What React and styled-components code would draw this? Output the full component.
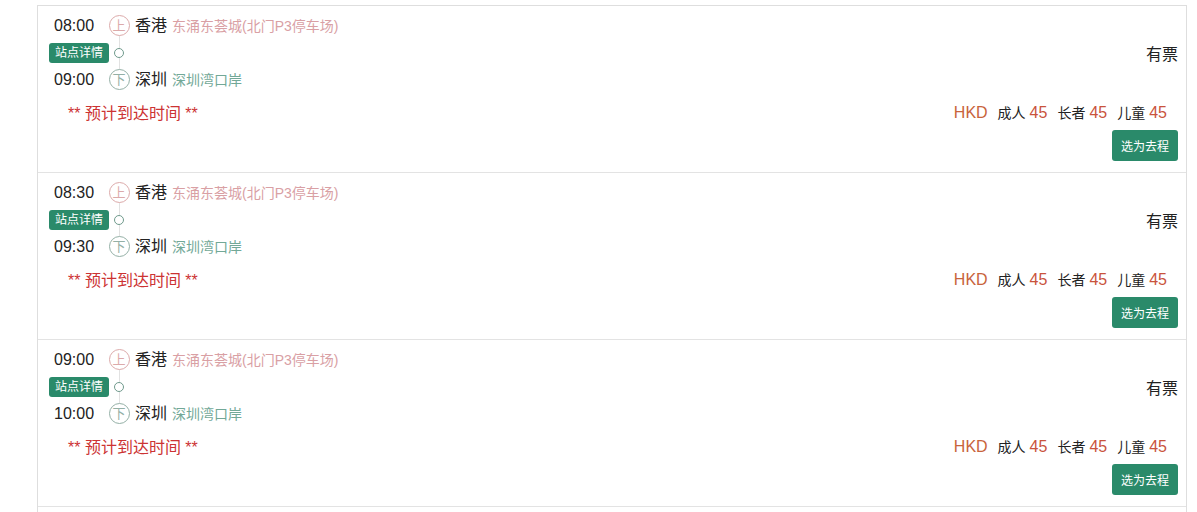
import React from "react";
import styled, { createGlobalStyle } from "styled-components";

const Global = createGlobalStyle`
  html, body { margin: 0; padding: 0; background: #fff; }
  body {
    font-family: "Liberation Sans", "Noto Sans CJK SC", sans-serif;
    color: #222;
  }
`;

const Page = styled.div`
  padding: 5px 10px 0 37px;
`;

const List = styled.div`
  border: 1px solid #dedede;
  border-bottom: none;
  padding-bottom: 12px;
`;

const Card = styled.div`
  display: flex;
  flex-direction: column;
  padding: 6px 8px 11px 11px;
  border-bottom: 1px solid #e3e3e3;
`;

const TopArea = styled.div`
  display: flex;
  justify-content: space-between;
  align-items: center;
`;

const RouteGrid = styled.div`
  display: grid;
  grid-template-columns: 60px 20px auto;
  grid-template-rows: repeat(3, 27px);
  align-items: center;
`;

const Time = styled.span`
  grid-column: 1;
  grid-row: ${(p) => p.$row};
  padding-left: 5px;
  font-size: 16px;
  line-height: 27px;
  color: #222;
`;

const Rail = styled.span`
  grid-column: 2;
  grid-row: 1 / 4;
  justify-self: center;
  align-self: stretch;
  width: 1px;
  margin: 13px 0;
  background: #e2e2e2;
`;

const StopMark = styled.span`
  grid-column: 2;
  grid-row: ${(p) => p.$row};
  justify-self: center;
  z-index: 1;
  box-sizing: border-box;
  width: 21px;
  height: 21px;
  border-radius: 50%;
  border: 1px solid ${(p) => p.$color};
  background: #fff;
  color: ${(p) => p.$color};
  font-size: 13px;
  line-height: 19px;
  text-align: center;
`;

const Dot = styled.span`
  grid-column: 2;
  grid-row: 2;
  justify-self: center;
  z-index: 1;
  box-sizing: border-box;
  width: 10px;
  height: 10px;
  border-radius: 50%;
  border: 1px solid #6f9a8c;
  background: #fff;
`;

const Badge = styled.span`
  grid-column: 1;
  grid-row: 2;
  justify-self: start;
  box-sizing: border-box;
  width: 60px;
  height: 20px;
  border-radius: 3px;
  background: #2a8a6a;
  color: #fff;
  font-size: 12px;
  line-height: 20px;
  text-align: center;
`;

const Stop = styled.span`
  grid-column: 3;
  grid-row: ${(p) => p.$row};
  padding-left: 6px;
  white-space: nowrap;
  line-height: 27px;
`;

const City = styled.span`
  font-size: 16px;
  color: #222;
`;

const Place = styled.span`
  margin-left: 5px;
  font-size: 14px;
  color: ${(p) => p.$color};
`;

const Status = styled.span`
  font-size: 16px;
  color: #222;
`;

const InfoRow = styled.div`
  display: flex;
  justify-content: space-between;
  align-items: center;
  height: 28px;
  margin-top: 5px;
`;

const Eta = styled.span`
  margin-left: 19px;
  font-size: 16px;
  color: #cc3333;
`;

const Prices = styled.div`
  display: flex;
  align-items: baseline;
  margin-right: 11px;
`;

const Currency = styled.span`
  font-size: 16px;
  color: #c8643c;
`;

const PriceItem = styled.span`
  margin-left: 10px;
  font-size: 14px;
  color: #222;
`;

const Amount = styled.span`
  margin-left: 4px;
  font-size: 16px;
  color: #c9533c;
`;

const ActionRow = styled.div`
  display: flex;
  justify-content: flex-end;
  margin-top: 4px;
`;

const SelectButton = styled.button`
  box-sizing: border-box;
  width: 66px;
  height: 31px;
  padding: 0;
  border: none;
  border-radius: 3px;
  background: #2a8a6a;
  color: #fff;
  font-family: inherit;
  font-size: 12px;
  cursor: pointer;
`;

const trips = [
  { dep: "08:00", arr: "09:00" },
  { dep: "08:30", arr: "09:30" },
  { dep: "09:00", arr: "10:00" },
];

function TripCard({ dep, arr }) {
  return (
    <Card>
      <TopArea>
        <RouteGrid>
          <Rail />
          <Time $row={1}>{dep}</Time>
          <StopMark $row={1} $color="#dcaaaa">上</StopMark>
          <Stop $row={1}>
            <City>香港</City>
            <Place $color="#d9a0a4">东涌东荟城(北门P3停车场)</Place>
          </Stop>
          <Badge>站点详情</Badge>
          <Dot />
          <Time $row={3}>{arr}</Time>
          <StopMark $row={3} $color="#94b0a6">下</StopMark>
          <Stop $row={3}>
            <City>深圳</City>
            <Place $color="#72a897">深圳湾口岸</Place>
          </Stop>
        </RouteGrid>
        <Status>有票</Status>
      </TopArea>
      <InfoRow>
        <Eta>** 预计到达时间 **</Eta>
        <Prices>
          <Currency>HKD</Currency>
          <PriceItem>成人<Amount>45</Amount></PriceItem>
          <PriceItem>长者<Amount>45</Amount></PriceItem>
          <PriceItem>儿童<Amount>45</Amount></PriceItem>
        </Prices>
      </InfoRow>
      <ActionRow>
        <SelectButton>选为去程</SelectButton>
      </ActionRow>
    </Card>
  );
}

export default function App() {
  return (
    <>
      <Global />
      <Page>
        <List>
          {trips.map((t) => (
            <TripCard key={t.dep} {...t} />
          ))}
        </List>
      </Page>
    </>
  );
}
